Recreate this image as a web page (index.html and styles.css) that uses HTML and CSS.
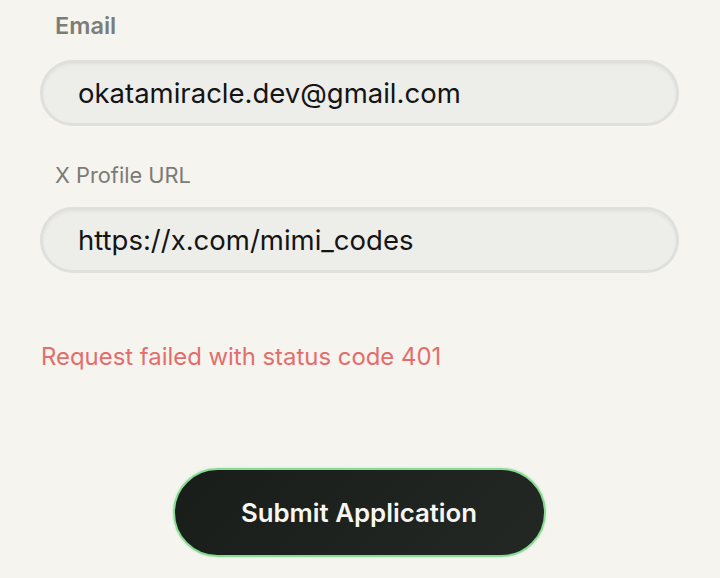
FILE: index.html
```html
<!DOCTYPE html>
<html>
<head>
<meta charset="utf-8">
<link rel="stylesheet" href="styles.css">
</head>
<body>
<form class="form">
  <div class="field">
    <label class="label label-strong">Email</label>
    <div class="input">okatamiracle.dev@gmail.com</div>
  </div>
  <div class="field field-2">
    <label class="label">X Profile URL</label>
    <div class="input input-2">https://x.com/mimi_codes</div>
  </div>
  <p class="error">Request failed with status code 401</p>
  <div class="actions">
    <button type="button" class="submit">Submit Application</button>
  </div>
</form>
</body>
</html>
```
FILE: styles.css
```css
html, body {
  margin: 0;
  padding: 0;
  background: #f5f4ee;
}
body {
  font-family: Inter, "Noto Sans", sans-serif;
  width: 720px;
  height: 578px;
  overflow: hidden;
}
.form {
  display: flex;
  flex-direction: column;
  padding: 11px 41px 0 40px;
}
.field {
  display: flex;
  flex-direction: column;
}
.field-2 {
  margin-top: 34px;
}
.label {
  padding-left: 15px;
  font-size: 21.8px;
  line-height: 30px;
  color: #7b7b76;
  font-weight: 400;
}
.label-strong {
  font-size: 23.5px;
  font-weight: 600;
  color: #7d7d78;
}
.input {
  margin-top: 19px;
  height: 60px;
  box-sizing: content-box;
  border: 3px solid #dfdfdb;
  border-radius: 40px;
  background: #ededea;
  box-shadow: inset 0 2px 3px rgba(0,0,0,0.04);
  display: flex;
  align-items: center;
  padding-left: 35px;
  font-size: 27.5px;
  color: #141414;
}
.input-2 {
  margin-top: 17px;
}
.error {
  margin: 69px 0 0 1px;
  font-size: 23.9px;
  line-height: 30px;
  color: #e36d6d;
}
.actions {
  display: flex;
  justify-content: center;
  margin-top: 96px;
  padding-right: 1px;
}
.submit {
  width: 373px;
  height: 89px;
  border-radius: 45px;
  border: 2px solid #86dc94;
  background: linear-gradient(135deg, #181d1a 0%, #242825 100%);
  color: #f6f6f2;
  font-family: Inter, "Noto Sans", sans-serif;
  font-weight: 600;
  font-size: 25.8px;
  box-shadow: 0 0 2px rgba(120,210,140,0.5);
}
```
